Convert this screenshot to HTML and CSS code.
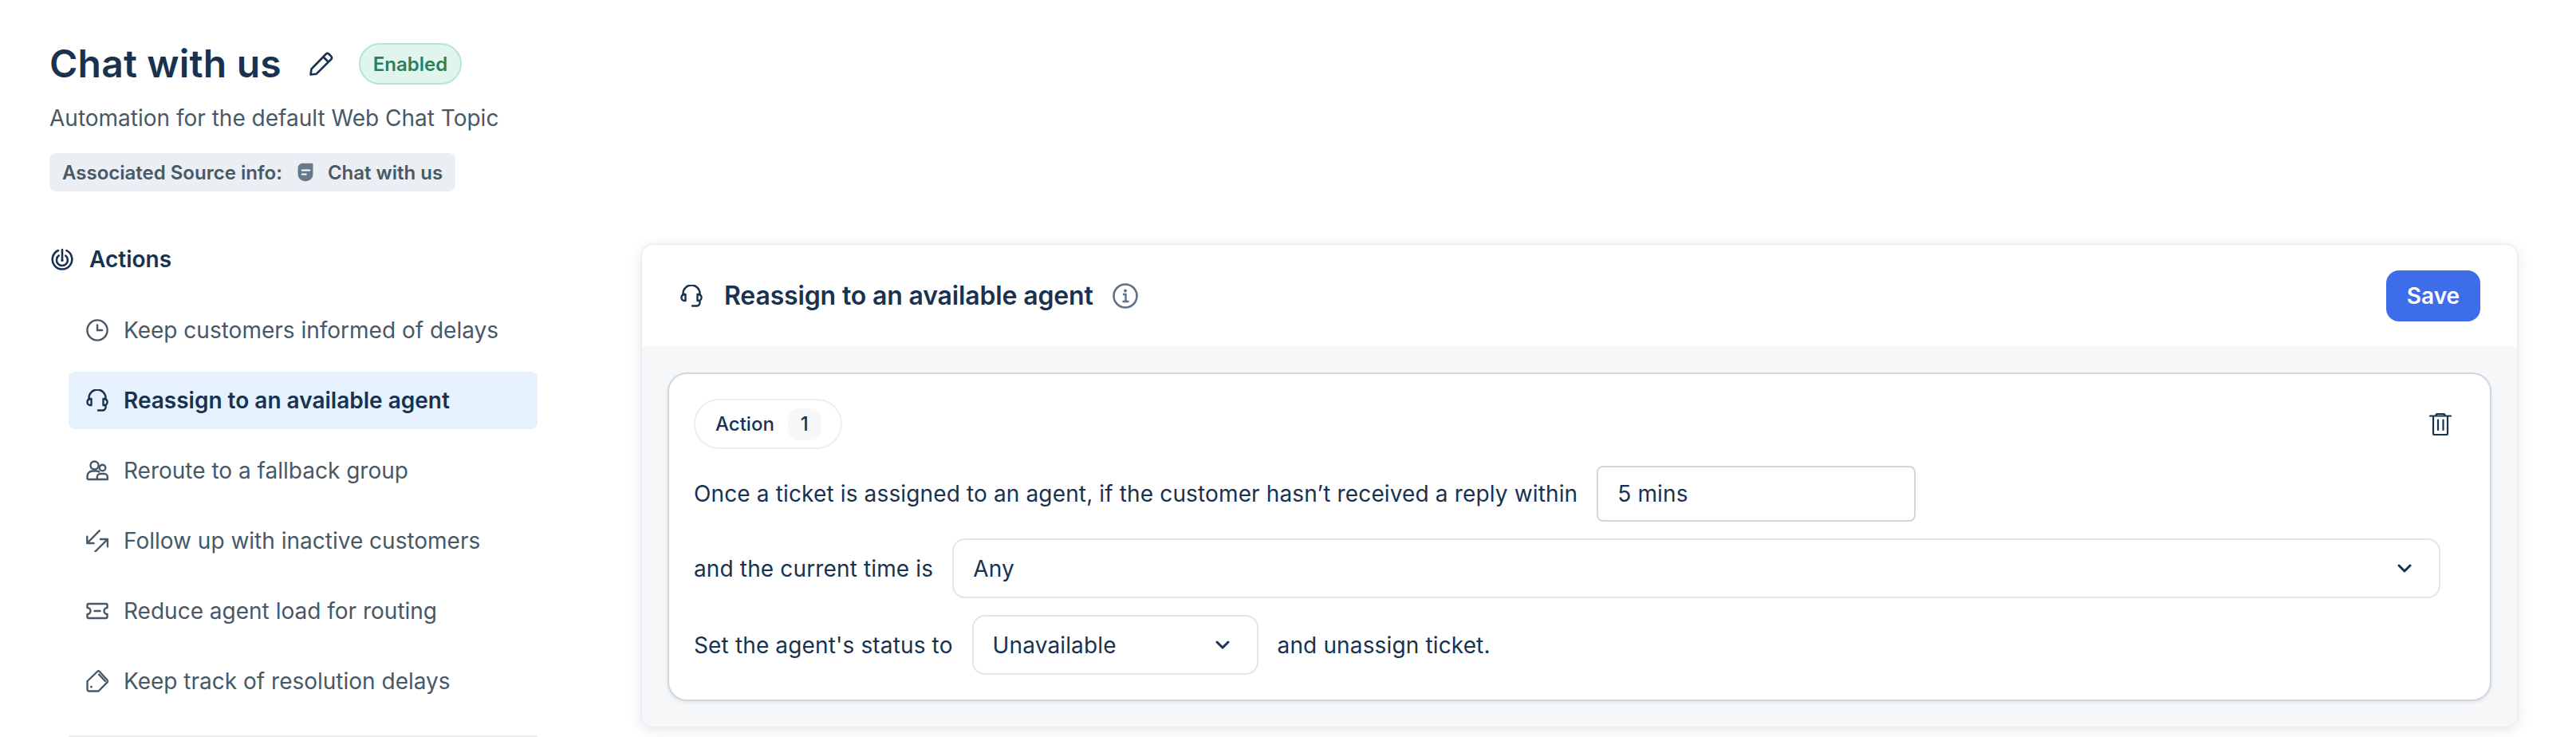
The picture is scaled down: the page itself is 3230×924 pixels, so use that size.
FILE: index.html
```html
<!DOCTYPE html>
<html lang="en">
<head>
<meta charset="utf-8">
<title>Chat with us</title>
<link rel="stylesheet" href="styles.css">
</head>
<body>
<div class="page">
  <header class="head">
    <div class="title-row">
      <h1 class="title">Chat with us</h1>
      <svg class="pencil" viewBox="0 0 30 30" fill="none" stroke="currentColor" stroke-width="2.6" stroke-linejoin="round"><path d="M1.5 28.5 2.5 21.5 20.5 3a3 3 0 0 1 4.2 0l2.3 2.3a3 3 0 0 1 0 4.2L8.5 27.8z"/><path d="M17.5 6.5 24 13"/></svg>
      <span class="status">Enabled</span>
    </div>
    <p class="subtitle">Automation for the default Web Chat Topic</p>
    <div class="source">
      <span>Associated Source info:</span>
      <svg class="source-icon" viewBox="0 0 22 28"><path fill="#657a8e" d="M7 1h14a1 1 0 0 1 1 1v15c0 6-5 10-11 10S0 23 0 17V8c0-4 3-7 7-7z"/><path stroke="#fff" stroke-width="2.4" stroke-linecap="round" d="M6 11h11M6 17h6"/></svg>
      <span>Chat with us</span>
    </div>
  </header>

  <main class="main">
    <nav class="side">
      <div class="side-head">
        <svg class="icon" viewBox="0 0 28 28" fill="none" stroke="currentColor" stroke-width="2.6" stroke-linecap="round"><path d="M9 3A12.300 12.300 0 1 0 19.500 3.200"/><path d="M9.800 9.400A7 7 0 1 0 18.300 9.600"/><path d="M14 2v13"/><circle cx="14" cy="15.500" r="1.600" fill="currentColor" stroke="none"/></svg>
        <span>Actions</span>
      </div>
      <ul class="items">
        <li class="item">
          <svg class="icon" viewBox="0 0 28 28" fill="none" stroke="currentColor" stroke-width="2.4" stroke-linecap="round"><circle cx="14" cy="14" r="12.6"/><path d="M14 7.5V14h6"/></svg>
          <span>Keep customers informed of delays</span>
        </li>
        <li class="item active">
          <svg class="icon" viewBox="0 0 28 28" fill="none" stroke="currentColor" stroke-width="2.4" stroke-linecap="round" stroke-linejoin="round"><path d="M3.5 13v-2a10.500 10.500 0 0 1 21 0v2"/><path d="M6.500 12H5a3.500 3.500 0 0 0-3.500 3.500v1A3.500 3.500 0 0 0 5 20h1.500zM21.500 12H23a3.500 3.500 0 0 1 3.500 3.500v1A3.500 3.500 0 0 1 23 20h-1.500z"/><path d="M24.500 20v2.500a4 4 0 0 1-4 4H15"/></svg>
          <span>Reassign to an available agent</span>
        </li>
        <li class="item">
          <svg class="icon" viewBox="0 0 28 28" fill="none" stroke="currentColor" stroke-width="2.4" stroke-linejoin="round"><circle cx="10.500" cy="7.500" r="5"/><circle cx="20.500" cy="10.500" r="3.800"/><path d="M1.500 25v-4a6.500 6.500 0 0 1 6.500-6.500h5a6.500 6.500 0 0 1 4 1.500"/><path d="M1.500 25h25.300v-3a4 4 0 0 0-4-4h-5a4 4 0 0 0-4 4v3"/></svg>
          <span>Reroute to a fallback group</span>
        </li>
        <li class="item">
          <svg class="icon" viewBox="0 0 28 28" fill="none" stroke="currentColor" stroke-width="2.400" stroke-linecap="round" stroke-linejoin="round"><path d="M16.700 1.300 1.300 17M1.300 8.700V17H9.500M11.300 27.500 27 12M18 12h9v9.300"/></svg>
          <span>Follow up with inactive customers</span>
        </li>
        <li class="item">
          <svg class="icon" viewBox="0 0 28 28" fill="none" stroke="currentColor" stroke-width="2.400" stroke-linecap="round" stroke-linejoin="round"><path d="M3 5h22a1.500 1.500 0 0 1 1.500 1.500V10a4 4 0 0 0 0 8v3.500A1.500 1.500 0 0 1 25 23H3a1.500 1.500 0 0 1-1.500-1.500V18a4 4 0 0 0 0-8V6.500A1.500 1.500 0 0 1 3 5z"/><path d="M10.500 14h7"/></svg>
          <span>Reduce agent load for routing</span>
        </li>
        <li class="item">
          <svg class="icon" viewBox="0 0 28 28" fill="none" stroke="currentColor" stroke-width="2.400" stroke-linecap="round" stroke-linejoin="round"><path d="M14 2a2 2 0 0 1 2.800 0L26.500 12.500a2 2 0 0 1 0 2.800L15.500 26.500H4a2.500 2.500 0 0 1-2.500-2.500V14z"/><path d="M16 5.500 24 14"/><circle cx="6.500" cy="21.200" r="1.400" fill="currentColor" stroke="none"/></svg>
          <span>Keep track of resolution delays</span>
        </li>
      </ul>
      <div class="divider"></div>
    </nav>

    <section class="panel">
      <div class="panel-head">
        <div class="panel-title">
          <svg class="icon" viewBox="0 0 28 28" fill="none" stroke="currentColor" stroke-width="2.4" stroke-linecap="round" stroke-linejoin="round"><path d="M3.500 13v-2a10.500 10.500 0 0 1 21 0v2"/><path d="M6.500 12H5a3.500 3.500 0 0 0-3.500 3.500v1A3.500 3.500 0 0 0 5 20h1.500zM21.500 12H23a3.500 3.500 0 0 1 3.500 3.500v1A3.500 3.500 0 0 1 23 20h-1.500z"/><path d="M24.500 20v2.500a4 4 0 0 1-4 4H15"/></svg>
          <h2 class="panel-name">Reassign to an available agent</h2>
          <svg class="info" viewBox="0 0 32 32" fill="none" stroke="#5f7388" stroke-width="2.600"><circle cx="16" cy="16" r="14.500"/><path d="M13 14h3.500v8.500M12.500 23h8" stroke-width="2.400"/><circle cx="16" cy="9.500" r="2" fill="#5f7388" stroke="none"/></svg>
        </div>
        <button class="save" type="button">Save</button>
      </div>
      <div class="panel-body">
        <div class="card">
          <div class="card-top">
            <div class="pill"><span>Action</span><span class="count">1</span></div>
            <svg class="icon trash" viewBox="0 0 28 28" fill="none" stroke="currentColor" stroke-width="2.200" stroke-linecap="round" stroke-linejoin="round"><path d="M1 3.500h26M8.500 3.500V2.500A1.500 1.500 0 0 1 10 1h8a1.500 1.500 0 0 1 1.500 1.500v1M5 3.500V25.500A1.500 1.500 0 0 0 6.500 27h15a1.500 1.500 0 0 0 1.500-1.500V3.500M11 8.500V21M17.500 8.500V21"/></svg>
          </div>
          <div class="line">
            <span>Once a ticket is assigned to an agent, if the customer hasn’t received a reply within</span>
            <div class="input">5 mins</div>
          </div>
          <div class="line">
            <span>and the current time is</span>
            <div class="select grow"><span>Any</span>
              <svg class="chevron" viewBox="0 0 18 11" fill="none" stroke="currentColor" stroke-width="3" stroke-linecap="round" stroke-linejoin="round"><path d="M2 2l7 7 7-7"/></svg>
            </div>
          </div>
          <div class="line">
            <span>Set the agent's status to</span>
            <div class="select small"><span>Unavailable</span>
              <svg class="chevron" viewBox="0 0 18 11" fill="none" stroke="currentColor" stroke-width="3" stroke-linecap="round" stroke-linejoin="round"><path d="M2 2l7 7 7-7"/></svg>
            </div>
            <span>and unassign ticket.</span>
          </div>
        </div>
      </div>
    </section>
  </main>
</div>
</body>
</html>
```

FILE: styles.css
```css
* { box-sizing: border-box; }
html, body { margin: 0; height: 924px; overflow: hidden; background: #fff; }
body { font-family: Inter, "Liberation Sans", sans-serif; color: #183250; font-size: 28px; }

.page { padding: 54px 72px 0 62px; }

.title-row { display: flex; align-items: center; height: 52px; }
.title { margin: 0; font-size: 48px; line-height: 52px; font-weight: 600; letter-spacing: .2px; }
.pencil { width: 30px; height: 30px; margin-left: 35px; }
.status { margin-left: 32px; width: 129px; height: 52px; display: flex; align-items: center; justify-content: center; background: #e1f5ef; border: 2px solid #b7e4d8; border-radius: 26px; color: #2e7d5b; font-size: 24px; font-weight: 600; }
.subtitle { margin: 22px 0 0; font-size: 28px; line-height: 40px; color: #475867; }
.source { display: inline-flex; align-items: center; height: 48px; margin-top: 24px; padding: 0 16px; border-radius: 8px; background: #ebeff3; color: #475867; font-size: 24px; font-weight: 600; }
.source-icon { width: 22px; height: 24px; margin: 0 17px 0 18px; }

.main { display: flex; margin-top: 65px; }
.side { flex: none; width: 612px; margin-right: 129px; }
.side-head { display: flex; align-items: center; height: 40px; gap: 20px; padding-left: 2px; font-weight: 600; }
.icon { flex: none; width: 28px; height: 28px; }
.items { list-style: none; margin: 33px 0 0 24px; padding: 0; display: flex; flex-direction: column; gap: 16px; }
.item { display: flex; align-items: center; gap: 19px; height: 72px; padding-left: 22px; border-radius: 8px; color: #475867; }
.item.active { background: #e5f1fc; color: #183250; font-weight: 600; }
.divider { height: 2px; margin: 32px 0 0 24px; background: #ebeff3; }

.panel { flex: 1; height: 608px; border: 2px solid #ebeff3; border-radius: 16px; background: #fff; box-shadow: 0 4px 16px rgba(18, 52, 77, .1); overflow: hidden; }
.panel-head { height: 127px; display: flex; align-items: center; justify-content: space-between; padding: 0 46px 0 48px; }
.panel-title { display: flex; align-items: center; }
.panel-name { margin: 0 0 0 27px; font-size: 32px; font-weight: 600; letter-spacing: -.15px; }
.info { width: 32px; height: 32px; margin-left: 24px; }
.save { width: 118px; height: 64px; border: 0; border-radius: 16px; background: #3d6de8; color: #fff; font: 600 28px Inter, "Liberation Sans", sans-serif; }
.panel-body { padding: 33px 32px 32px; background: #f5f7f9; height: 479px; }
.card { height: 412px; padding: 31px 36px 0 31px; display: flex; flex-direction: column; gap: 21px; background: #fff; border: 2px solid #cfd7df; border-radius: 24px; box-shadow: 0 2px 4px rgba(18, 52, 77, .08); }
.card-top { display: flex; align-items: center; justify-content: space-between; height: 63px; padding-right: 12px; }
.pill { display: flex; align-items: center; height: 63px; padding: 0 24px 0 25px; gap: 17px; border: 2px solid #ebeff3; border-radius: 32px; font-size: 24px; font-weight: 500; }
.count { width: 42px; height: 40px; display: flex; align-items: center; justify-content: center; border-radius: 14px; background: #f5f7f9; }
.line { display: flex; align-items: center; gap: 24px; min-height: 70px; letter-spacing: .14px; }
.input { width: 400px; height: 70px; padding: 0 24px; display: flex; align-items: center; border: 2px solid #cfd7df; border-radius: 8px; }
.select { height: 75px; padding: 0 34px 0 24px; display: flex; align-items: center; justify-content: space-between; border: 2px solid #dfe5eb; border-radius: 16px; }
.select.grow { flex: 1; margin-right: 26px; }
.select.small { width: 359px; }
.chevron { width: 18px; height: 11px; }
```
